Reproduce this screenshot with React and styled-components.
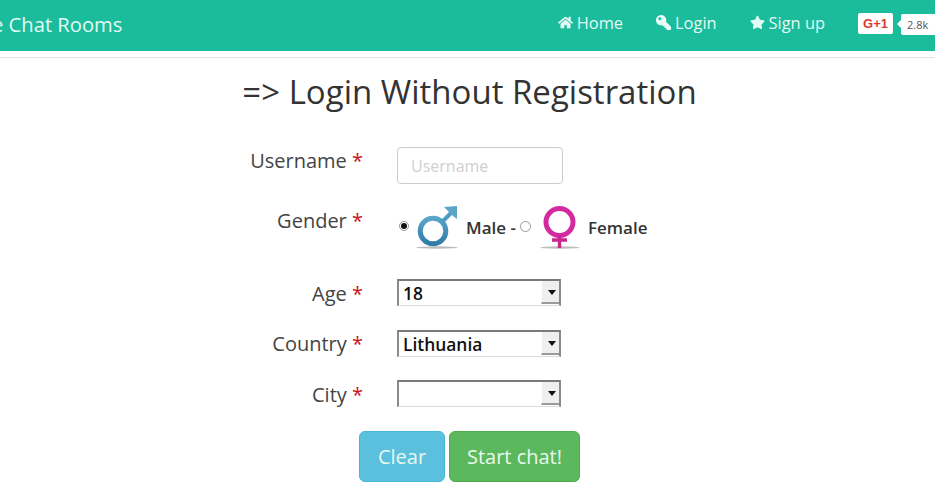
import React from 'react'
import styled, { createGlobalStyle } from 'styled-components'
import { FaHome, FaKey, FaStar } from 'react-icons/fa'

const Global = createGlobalStyle`
html,body{
  margin:0;
  padding:0;
  background:#fff;
  overflow:hidden;
  font-family:"Open Sans",sans-serif;
  color:#333;
}
`

const Nav = styled.nav`
  height:51px;
  background:#1abc9c;
  display:flex;
  align-items:center;
  justify-content:space-between;
  overflow:hidden;
  color:#e4faf5;
`
const Brand = styled.a`
  font-size:20.2px;
  margin-left:-38px;
  white-space:nowrap;
  position:relative;
  top:-2px;
`
const Links = styled.div`
  display:flex;
  align-items:center;
  margin-right:-6px;
`
const NavLink = styled.a`
  display:flex;
  align-items:center;
  gap:4px;
  font-size:16.4px;
  margin-right:33px;
  white-space:nowrap;
  position:relative;
  top:-3px;
  svg{ width:15px; height:15px; }
`
const KeyIcon = styled(FaKey)`
  transform:scaleX(-1);
`
const PlusOne = styled.div`
  width:35px;
  height:21px;
  background:#fff;
  border-radius:2px;
  display:flex;
  align-items:center;
  justify-content:center;
  color:#d73d32;
  font:bold 13px "Liberation Sans",sans-serif;
  position:relative;
  top:-2px;
`
const Count = styled.div`
  width:40px;
  height:21px;
  margin-left:8px;
  background:#fff;
  border-radius:2px;
  color:#555;
  font:11px "Open Sans",sans-serif;
  line-height:21px;
  padding-left:6px;
  box-sizing:border-box;
  position:relative;
  top:-1px;
  &::before{
    content:"";
    position:absolute;
    left:-4px;
    top:6px;
    border-style:solid;
    border-width:4px 4px 4px 0;
    border-color:transparent #fff transparent transparent;
  }
`
const Rule = styled.hr`
  margin:6px 0 0;
  border:0;
  border-top:1px solid #e4e2d8;
`
const Title = styled.h1`
  margin:12px 0 0;
  text-align:center;
  font-size:33px;
  line-height:44px;
  font-weight:400;
  color:#333;
  transform:translateX(2px);
`
const Form = styled.form`
  margin-top:33px;
  display:flex;
  flex-direction:column;
`
const Row = styled.div`
  display:grid;
  grid-template-columns:363px 1fr;
  column-gap:34px;
  height:${p=>p.$h}px;
`
const Label = styled.label`
  text-align:right;
  font-size:20px;
  line-height:27px;
  padding-top:${p=>p.$top}px;
  color:#444;
`
const Star = styled.span`
  color:#c9101a;
`
const TextInput = styled.input`
  width:166px;
  height:37px;
  box-sizing:border-box;
  border:1px solid #ccc;
  border-radius:4px;
  padding:0 13px;
  font:16px "Open Sans",sans-serif;
  &::placeholder{ color:#cfcfcf; opacity:1; }
`
const GenderCell = styled.div`
  display:flex;
  align-items:center;
  height:40px;
  font-size:17px;
  font-weight:600;
  color:#333;
`
const Radio = styled.span`
  width:${p=>p.$on?10:11}px;
  height:${p=>p.$on?10:11}px;
  border-radius:50%;
  border:1px solid #999;
  background:#fff;
  box-sizing:border-box;
  display:flex;
  align-items:center;
  justify-content:center;
  margin:-2px ${p=>p.$on?7:9}px 0 ${p=>p.$on?2:0}px;
  flex:none;
  &::after{
    content:"";
    width:6px;
    height:6px;
    border-radius:50%;
    background:${p=>p.$on?'#111':'transparent'};
  }
`
const Word = styled.span`
  margin:0 ${p=>p.$right}px 0 7px;
  white-space:nowrap;
`
const SelectWrap = styled.div`
  position:relative;
  width:164px;
  height:27px;
  &::after{
    content:"";
    position:absolute;
    right:5px;
    top:11px;
    border-style:solid;
    border-width:5px 4px 0 4px;
    border-color:#111 transparent transparent transparent;
    pointer-events:none;
  }
  &::before{
    content:"";
    position:absolute;
    right:2px;
    top:2px;
    width:17px;
    height:21px;
    background:#efefef;
    border-left:1px solid #fff;
    border-bottom:2px solid #9a9a9a;
    pointer-events:none;
  }
`
const Select = styled.select`
  appearance:none;
  width:100%;
  height:100%;
  box-sizing:border-box;
  border-style:solid;
  border-width:2px 2px 1px 2px;
  border-color:#7a7a7a #8a8a8a #dcdcdc #8a8a8a;
  border-radius:0;
  background:#fff;
  padding:0 0 0 4px;
  font:600 17.4px "Open Sans",sans-serif;
  color:#111;
`
const Buttons = styled.div`
  display:flex;
  gap:4px;
  margin:4px 0 0 359px;
`
const Button = styled.button`
  height:51px;
  width:${p=>p.$w}px;
  border:1px solid ${p=>p.$border};
  border-radius:6px;
  background:${p=>p.$bg};
  color:#e8f8ef;
  font:20px "Open Sans",sans-serif;
  padding:0;
`

const MaleIcon = () => (
  <svg width="43" height="43" viewBox="0 0 43 43">
    <defs>
      <linearGradient id="mg" x1="0" y1="0" x2="0" y2="1">
        <stop offset="0" stopColor="#5aa5c8"/>
        <stop offset="1" stopColor="#2f7ca8"/>
      </linearGradient>
    </defs>
    <ellipse cx="21" cy="41.5" rx="21" ry="1.2" fill="#bbb"/>
    <circle cx="17" cy="25" r="12.8" fill="none" stroke="url(#mg)" strokeWidth="5"/>
    <path d="M26 16 L37 5" stroke="#4c9cc4" strokeWidth="4" fill="none"/>
    <path d="M28 1 L41 0 L41 13 L37 10 L32 5 Z" fill="#5aa5c8"/>
  </svg>
)

const FemaleIcon = () => (
  <svg width="41" height="43" viewBox="0 0 41 43">
    <ellipse cx="20" cy="41.5" rx="20" ry="1.2" fill="#bbb"/>
    <circle cx="19.5" cy="16" r="13.5" fill="none" stroke="#d42a9f" strokeWidth="5"/>
    <path d="M19.5 30 V42 M12 34 H27" stroke="#c9258f" strokeWidth="3.4" fill="none"/>
  </svg>
)

export default function App(){
  return (
    <>
      <Global/>
      <Nav>
        <Brand>Free Chat Rooms</Brand>
        <Links>
          <NavLink><FaHome/>Home</NavLink>
          <NavLink><KeyIcon/>Login</NavLink>
          <NavLink><FaStar/>Sign up</NavLink>
          <PlusOne>G+1</PlusOne>
          <Count>2.8k</Count>
        </Links>
      </Nav>
      <Rule/>
      <Title>=&gt; Login Without Registration</Title>
      <Form>
        <Row $h={60}>
          <Label $top={0}>Username <Star>*</Star></Label>
          <TextInput placeholder="Username"/>
        </Row>
        <Row $h={72}>
          <Label $top={0}>Gender <Star>*</Star></Label>
          <GenderCell>
            <Radio $on/>
            <MaleIcon/>
            <Word $right={4}>Male -</Word>
            <Radio/>
            <FemaleIcon/>
            <Word $right={0}>Female</Word>
          </GenderCell>
        </Row>
        <Row $h={51}>
          <Label $top={1}>Age <Star>*</Star></Label>
          <SelectWrap><Select defaultValue="18"><option>18</option></Select></SelectWrap>
        </Row>
        <Row $h={50}>
          <Label $top={0}>Country <Star>*</Star></Label>
          <SelectWrap><Select defaultValue="Lithuania"><option>Lithuania</option></Select></SelectWrap>
        </Row>
        <Row $h={47}>
          <Label $top={1}>City <Star>*</Star></Label>
          <SelectWrap><Select><option></option></Select></SelectWrap>
        </Row>
        <Buttons>
          <Button type="button" $w={86} $bg="#5bc0de" $border="#46b8da">Clear</Button>
          <Button type="button" $w={131} $bg="#5cb85c" $border="#4cae4c">Start chat!</Button>
        </Buttons>
      </Form>
    </>
  )
}
